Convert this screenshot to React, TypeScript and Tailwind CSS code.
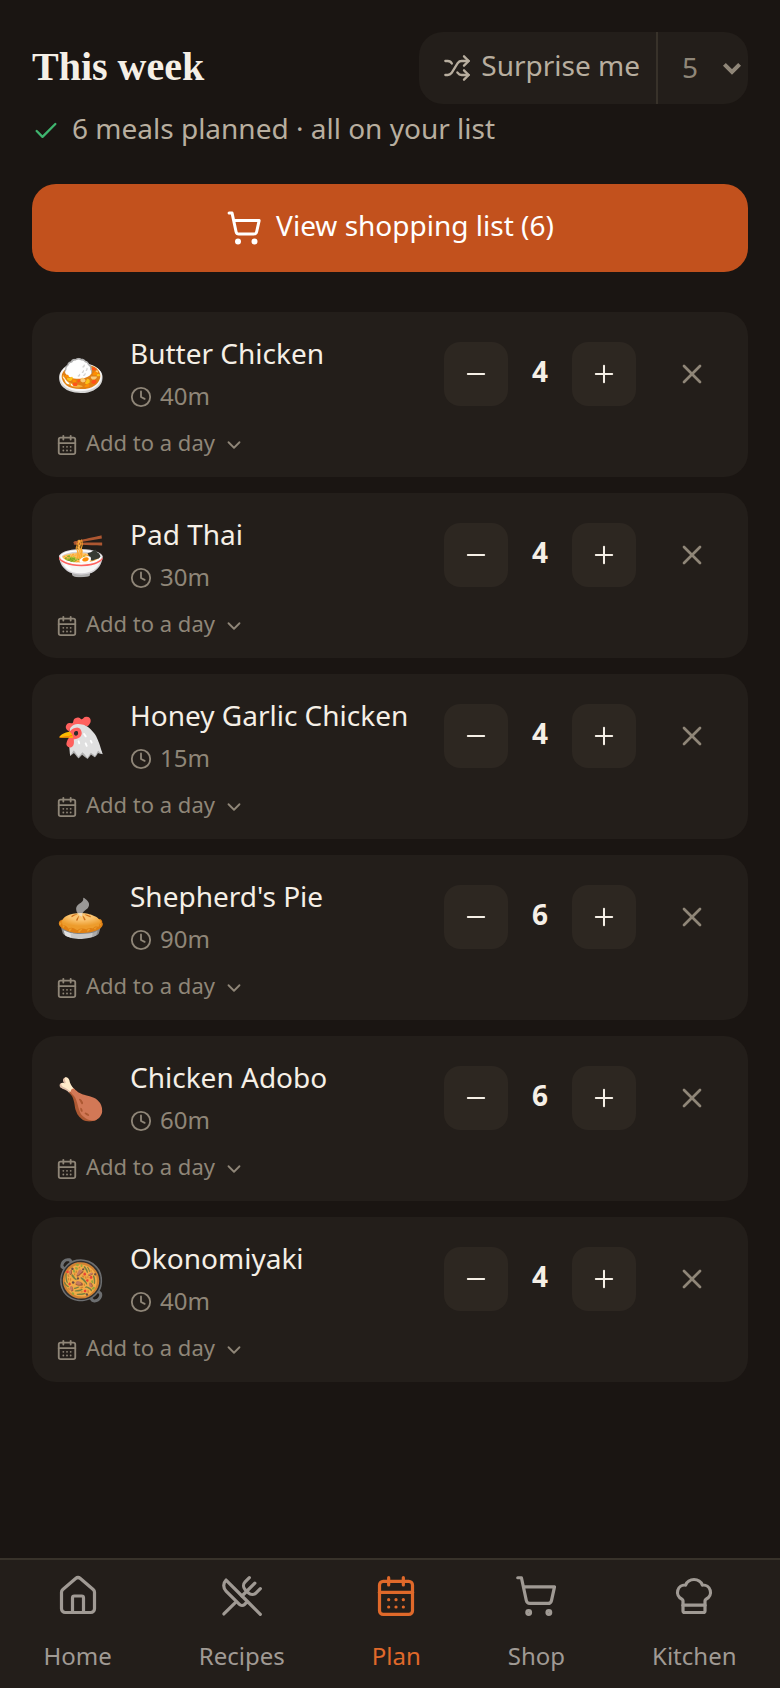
import React, { useState } from 'react';
import {
    CalendarDays,
    Check,
    ChefHat,
    ChevronDown,
    Clock,
    House,
    Minus,
    Plus,
    ShoppingCart,
    Shuffle,
    UtensilsCrossed,
    X,
} from 'lucide-react';

interface Meal {
    id: number;
    emoji: string;
    name: string;
    minutes: number;
    servings: number;
}

const initialMeals: Meal[] = [
    { id: 1, emoji: '🍛', name: 'Butter Chicken', minutes: 40, servings: 4 },
    { id: 2, emoji: '🍜', name: 'Pad Thai', minutes: 30, servings: 4 },
    { id: 3, emoji: '🐔', name: 'Honey Garlic Chicken', minutes: 15, servings: 4 },
    { id: 4, emoji: '🥧', name: "Shepherd's Pie", minutes: 90, servings: 6 },
    { id: 5, emoji: '🍗', name: 'Chicken Adobo', minutes: 60, servings: 6 },
    { id: 6, emoji: '🥘', name: 'Okonomiyaki', minutes: 40, servings: 4 },
];

const navItems = [
    { label: 'Home', icon: House },
    { label: 'Recipes', icon: UtensilsCrossed },
    { label: 'Plan', icon: CalendarDays },
    { label: 'Shop', icon: ShoppingCart },
    { label: 'Kitchen', icon: ChefHat },
];

interface MealCardProps {
    meal: Meal;
    onChange: (servings: number) => void;
    onRemove: () => void;
}

const MealCard: React.FC<MealCardProps> = ({ meal, onChange, onRemove }) => (
    <li className="rounded-3xl bg-[#231e1a] px-6 pt-5 pb-4">
        <div className="flex items-center">
            <span className="mr-6 text-[40px] leading-[48px]">{meal.emoji}</span>
            <div className="min-w-0 flex-1">
                <h2 className="truncate text-[28px] leading-[42px] text-[#f5efe6]">{meal.name}</h2>
                <p className="mt-1 flex items-center gap-2 text-2xl text-[#8f8678]">
                    <Clock size={22} />
                    <span className="pb-0.5 leading-9">{meal.minutes}m</span>
                </p>
            </div>
            <div className="flex items-center text-[#f5efe6]">
                <button
                    type="button"
                    aria-label="Fewer servings"
                    onClick={() => onChange(Math.max(1, meal.servings - 1))}
                    className="flex size-16 items-center justify-center rounded-2xl bg-[#2d2721]"
                >
                    <Minus size={28} strokeWidth={1.75} />
                </button>
                <span className="w-16 pb-1.5 text-center text-[28px] leading-9 font-bold">{meal.servings}</span>
                <button
                    type="button"
                    aria-label="More servings"
                    onClick={() => onChange(meal.servings + 1)}
                    className="flex size-16 items-center justify-center rounded-2xl bg-[#2d2721]"
                >
                    <Plus size={28} strokeWidth={1.75} />
                </button>
            </div>
            <button
                type="button"
                aria-label={`Remove ${meal.name}`}
                onClick={onRemove}
                className="ml-6 flex size-16 items-center justify-center text-[#8f8678]"
            >
                <X size={32} />
            </button>
        </div>
        <button type="button" className="mt-3 flex items-center gap-2 text-[22px] text-[#8f8678]">
            <CalendarDays size={22} />
            <span className="pb-1 leading-[29px]">Add to a day</span>
            <ChevronDown size={22} />
        </button>
    </li>
);

const App: React.FC = () => {
    const [meals, setMeals] = useState(initialMeals);
    const [surpriseCount, setSurpriseCount] = useState('5');

    const setServings = (id: number, servings: number) => {
        setMeals(meals.map(m => (m.id === id ? { ...m, servings } : m)));
    };

    return (
        <div className="flex min-h-screen flex-col bg-[#1a1512] font-['Noto_Sans',sans-serif]">
            <main className="flex-1 px-8 pt-8 pb-10">
                <header className="flex items-center justify-between">
                    <h1 className="pb-0.5 font-['Liberation_Serif',serif] text-[40px] leading-[48px] font-bold text-[#f5efe6]">
                        This week
                    </h1>
                    <div className="flex h-[72px] overflow-hidden rounded-3xl bg-[#231e1a]">
                        <button type="button" className="flex items-center gap-2.5 pr-4 pl-6 text-[28px] text-[#b8ae9f]">
                            <Shuffle size={28} />
                            <span className="pb-1.5 leading-9">Surprise me</span>
                        </button>
                        <div className="relative border-l-2 border-[#38322a] text-[#8f8678]">
                            <select
                                aria-label="Number of meals"
                                value={surpriseCount}
                                onChange={e => setSurpriseCount(e.target.value)}
                                className="h-full w-[90px] appearance-none bg-transparent pb-0.5 pl-6 text-[28px]"
                            >
                                <option>3</option>
                                <option>4</option>
                                <option>5</option>
                                <option>6</option>
                                <option>7</option>
                            </select>
                            <svg
                                className="pointer-events-none absolute top-[30px] right-1.5"
                                width="20"
                                height="14"
                                viewBox="0 0 20 14"
                                fill="none"
                                stroke="currentColor"
                                strokeWidth="4"
                            >
                                <path d="M2.4 2.4 10 10l7.600-7.600" />
                            </svg>
                        </div>
                    </div>
                </header>

                <p className="mt-1.5 flex items-center gap-3 text-[28px] text-[#b8ae9f]">
                    <Check size={28} className="text-[#3fb56f]" />
                    <span className="pb-1.5 leading-9">{meals.length} meals planned · all on your list</span>
                </p>

                <button
                    type="button"
                    className="mt-8 flex h-[88px] w-full items-center justify-center gap-3.5 rounded-3xl bg-[#c2511d] text-[28px] text-white"
                >
                    <ShoppingCart size={36} />
                    <span className="pb-1.5 leading-9">View shopping list ({meals.length})</span>
                </button>

                <ul className="mt-10 flex flex-col gap-4">
                    {meals.map(meal => (
                        <MealCard
                            key={meal.id}
                            meal={meal}
                            onChange={servings => setServings(meal.id, servings)}
                            onRemove={() => setMeals(meals.filter(m => m.id !== meal.id))}
                        />
                    ))}
                </ul>
            </main>

            <nav className="sticky bottom-0 flex justify-around border-t-2 border-[#38322a] bg-[#231e1a] pt-3.5 pb-3.5">
                {navItems.map(({ label, icon: Icon }) => (
                    <a
                        key={label}
                        href={`#${label.toLowerCase()}`}
                        aria-current={label === 'Plan' ? 'page' : undefined}
                        className={`flex flex-col items-center gap-5 text-2xl leading-9 ${
                            label === 'Plan' ? 'text-[#e0692a]' : 'text-[#a09a94]'
                        }`}
                    >
                        <Icon size={44} strokeWidth={1.75} />
                        {label}
                    </a>
                ))}
            </nav>
        </div>
    );
};

export default App;
